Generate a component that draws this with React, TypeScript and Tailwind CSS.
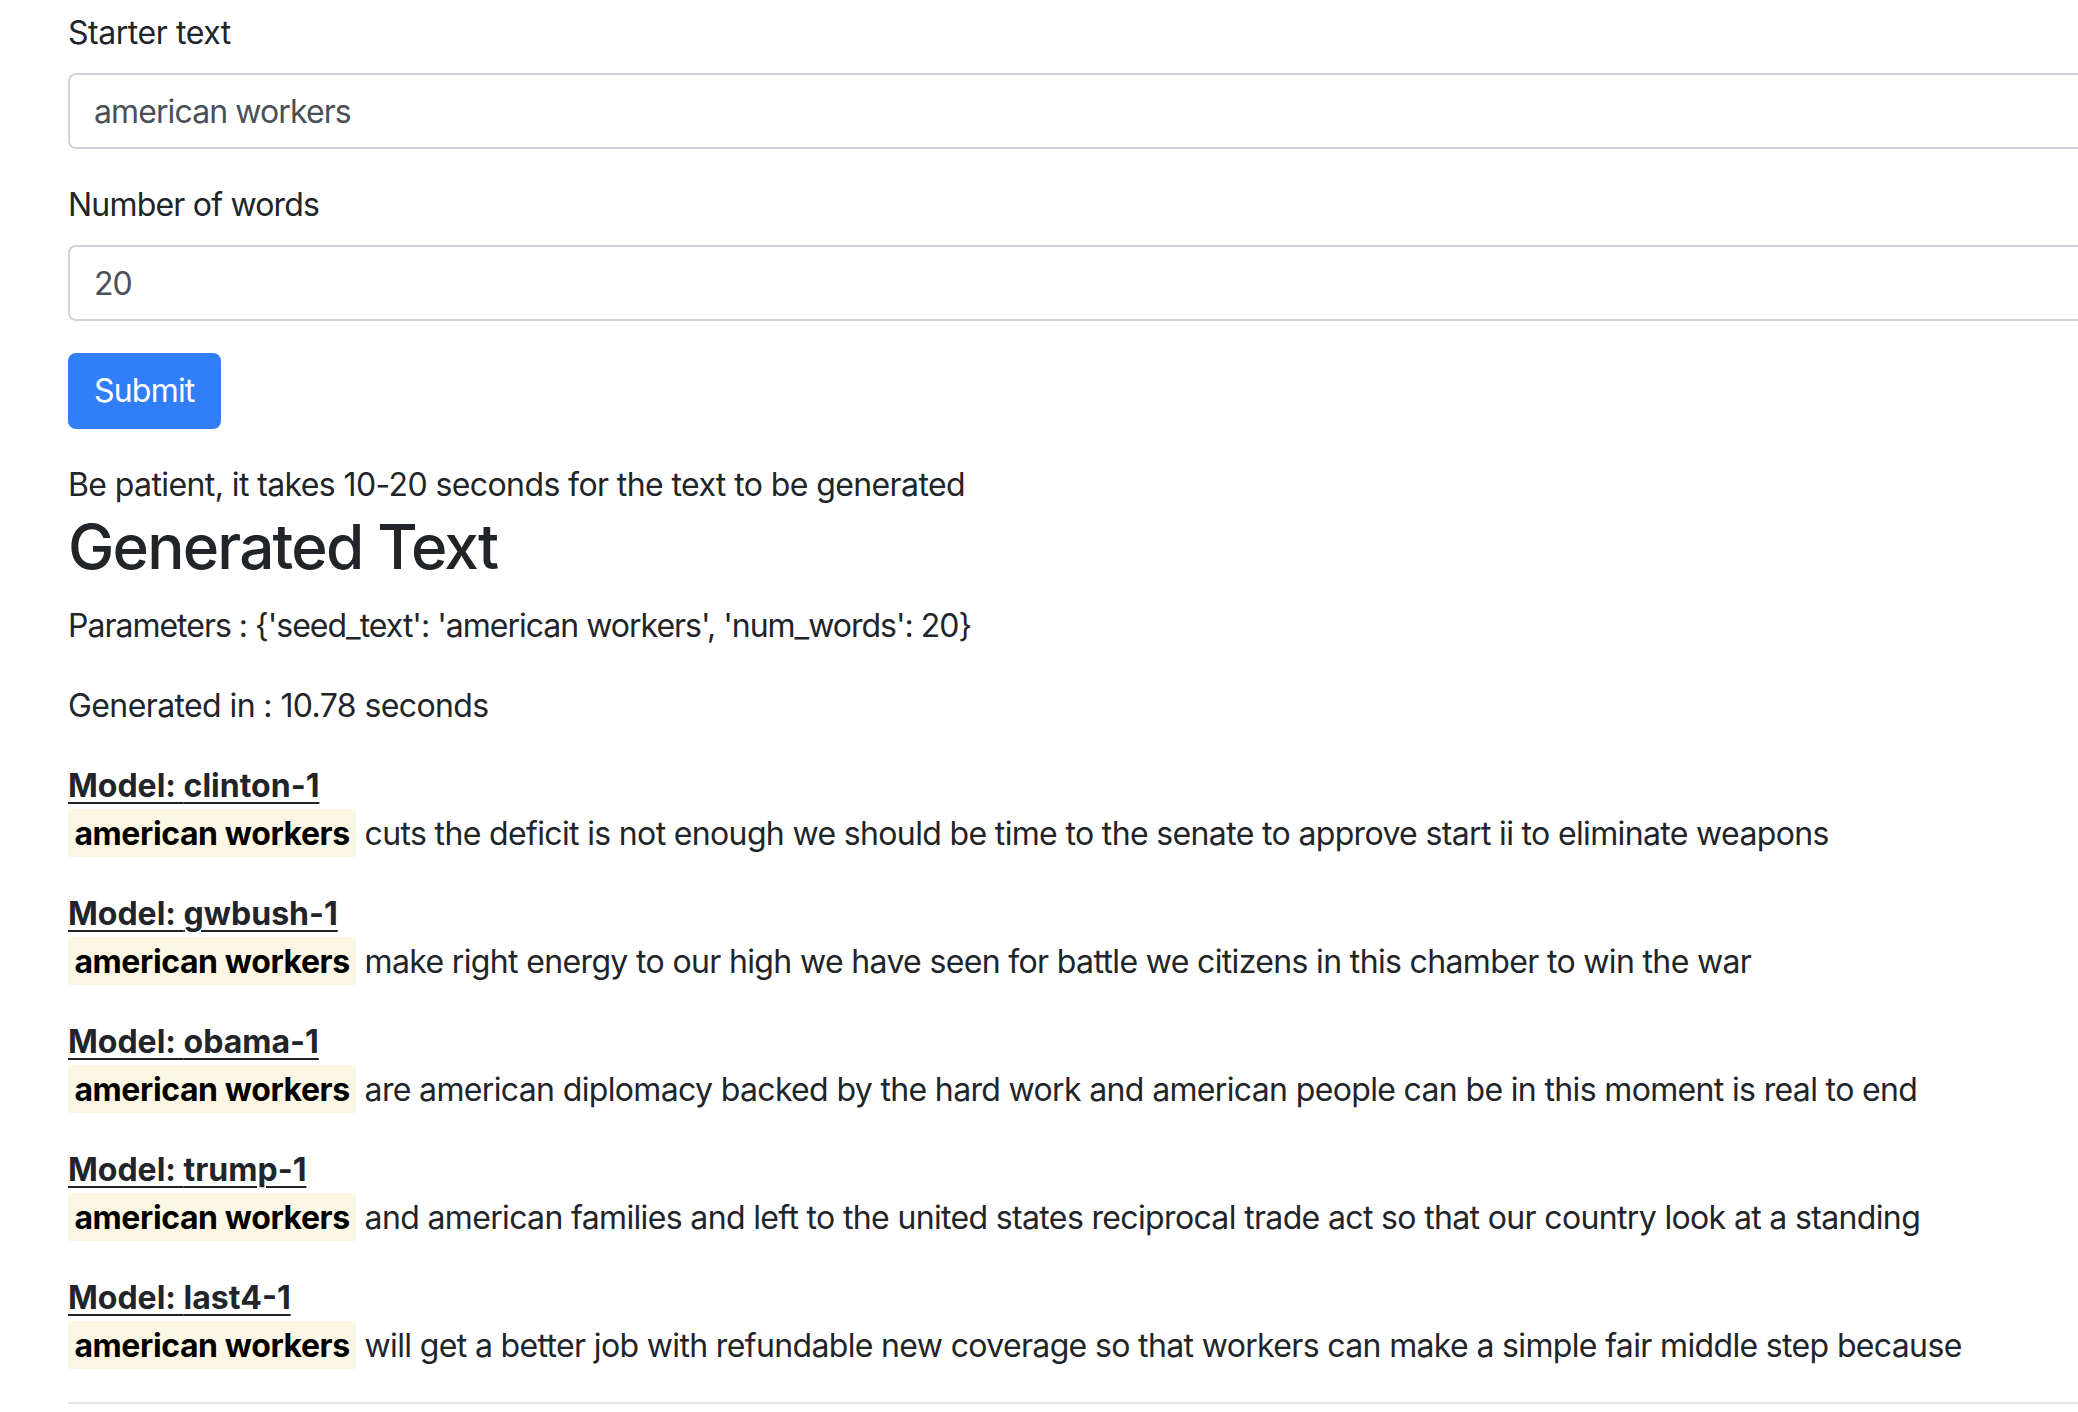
import React from 'react';

const results = [
  { model: 'clinton-1', text: 'cuts the deficit is not enough we should be time to the senate to approve start ii to eliminate weapons' },
  { model: 'gwbush-1', text: 'make right energy to our high we have seen for battle we citizens in this chamber to win the war' },
  { model: 'obama-1', text: 'are american diplomacy backed by the hard work and american people can be in this moment is real to end' },
  { model: 'trump-1', text: 'and american families and left to the united states reciprocal trade act so that our country look at a standing' },
  { model: 'last4-1', text: 'will get a better job with refundable new coverage so that workers can make a simple fair middle step because' },
];

export default function App() {
  return (
    <div className="min-h-screen bg-white overflow-hidden font-['Inter',sans-serif] text-[32px] leading-[48px] tracking-[-0.6px] text-[#212529]">
      <div className="pl-[68px] pt-[9px]">
        {/* Form */}
        <form className="mb-[32px]" onSubmit={(e) => e.preventDefault()}>
          <div className="mb-[32px]">
            <label className="block mb-[16px] tracking-[-0.45px]">Starter text</label>
            <input
              type="text"
              defaultValue="american workers"
              className="block w-full h-[76px] px-[24px] tracking-[-0.9px] text-[#495057] bg-white border-2 border-r-0 border-[#ced4da] rounded-l-[8px] outline-none"
            />
          </div>
          <div className="mb-[32px]">
            <label className="block mb-[16px] tracking-[-0.8px]">Number of words</label>
            <input
              type="text"
              defaultValue="20"
              className="block w-full h-[76px] px-[24px] tracking-[-0.9px] text-[#495057] bg-white border-2 border-r-0 border-[#ced4da] rounded-l-[8px] outline-none"
            />
          </div>
          <button
            type="submit"
            className="h-[76px] px-[24px] border-2 border-[#317ff6] bg-[#317ff6] text-white rounded-[8px] tracking-[-0.8px]"
          >
            Submit
          </button>
        </form>

        <p>Be patient, it takes 10-20 seconds for the text to be generated</p>
        <h2 className="text-[62px] leading-[76.8px] font-medium tracking-[-1.8px] mb-[16px]">Generated Text</h2>

        <p className="mb-[32px] tracking-[-1px]">Parameters : {"{'seed_text': 'american workers', 'num_words': 20}"}</p>
        <p className="mb-[32px]">Generated in : 10.78 seconds</p>

        {/* Results */}
        {results.map((r) => (
          <p key={r.model} className="mb-[32px] whitespace-nowrap">
            <b className="font-bold tracking-normal underline decoration-2 underline-offset-[5px]">Model: {r.model}</b>
            <br />
            <mark className="bg-[#fcf7e4] px-[6.4px] py-[4.7px] text-black font-bold tracking-[-0.4px]">american workers</mark>{' '}
            <span className="tracking-[-0.65px]">{r.text}</span>
          </p>
        ))}

        <hr className="border-0 border-t-2 border-[#e5e5e5]" />
      </div>
    </div>
  );
}
